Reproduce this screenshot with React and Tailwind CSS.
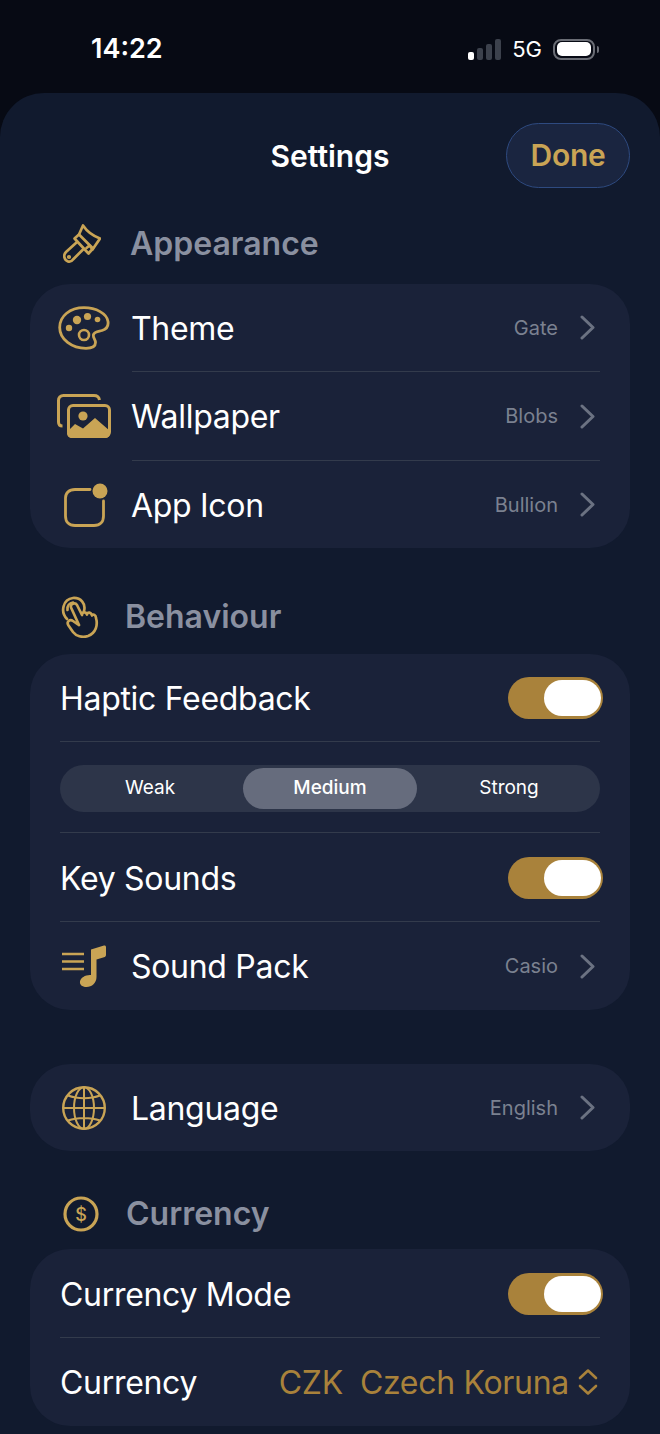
import React from 'react'

const GOLD = '#c9a455'

function BrushIcon() {
  return (
    <svg width="38" height="41" viewBox="8 8 38 41" fill="none" stroke={GOLD} strokeWidth="2.7" strokeLinejoin="round" strokeLinecap="round">
      <path d="M24 18.5 L28 9.5 C31 14 37 19.5 45 22.5 L37.5 33.5 L34.5 29.5 L31.5 32" />
      <path d="M19.5 22.5 L24 18.5 L38 32.5 L33.5 37.5 Z" />
      <path d="M21.5 26.5 L11 36 C8 39 9 44 13 45.5 C15 46 17 45 18 43.5 L28 33.5" />
      <circle cx="14" cy="41" r="1.2" strokeWidth="1.8" />
    </svg>
  )
}

function PaletteIcon() {
  return (
    <svg width="52" height="44" viewBox="0 0 52 44" fill="none">
      <path d="M26 1.7 C12 1.7 1.7 10 1.7 21.5 C1.7 33.5 14 42.3 28 42.3 C34 42.3 37.5 40.5 37.5 36.5 C37.5 33.5 34.5 31.5 35.5 28.5 C36.5 25.5 40.5 25.5 44 24.5 C48 23.3 50.6 20 50 15.5 C49 7.5 38 1.7 26 1.7Z" stroke={GOLD} strokeWidth="2.8" />
      <circle cx="19" cy="14" r="4.2" fill={GOLD} />
      <circle cx="29.5" cy="10.5" r="3.6" fill={GOLD} />
      <circle cx="39.5" cy="13.5" r="2.8" fill={GOLD} />
      <circle cx="11" cy="22" r="3.2" fill={GOLD} />
      <circle cx="26" cy="29" r="5" stroke={GOLD} strokeWidth="2.6" />
    </svg>
  )
}

function WallpaperIcon() {
  return (
    <svg width="54" height="44" viewBox="0 0 54 44" fill="none">
      <path d="M5.5 32 C3 32 1.5 30.5 1.5 28 V6.5 C1.5 3.5 3.5 1.5 6.5 1.5 H37 C40 1.5 42 3.2 42.5 6" stroke={GOLD} strokeWidth="3" />
      <rect x="11.5" y="11.5" width="41" height="31" rx="4.5" stroke={GOLD} strokeWidth="3" />
      <circle cx="26" cy="22" r="4.6" fill={GOLD} />
      <path d="M11 37 L18 30 L26 34.5 L38 24 L53 37 V39 C53 42 51 44 48 44 H15 C12 44 10 42 10 39Z" fill={GOLD} />
    </svg>
  )
}

function AppIconIcon() {
  return (
    <svg width="44" height="44" viewBox="0 0 44 44" fill="none">
      <path d="M26 6.5 H11 C5 6.5 1.5 10 1.5 15 V33 C1.5 39 5 42.5 11 42.5 H30 C36 42.5 39.5 39 39.5 33 V18" stroke={GOLD} strokeWidth="2.8" strokeLinecap="round" />
      <circle cx="36" cy="8" r="7.5" fill={GOLD} />
    </svg>
  )
}

function HandIcon() {
  return (
    <svg width="38" height="42" viewBox="6 4 38 42" fill="none" stroke={GOLD} strokeWidth="2.7" strokeLinecap="round" strokeLinejoin="round">
      <path d="M12 27 C5 20 8 7 18 6 C26 5.5 31 12 29 19" />
      <path d="M12.5 18 C12 14 14.5 11 18 10.5" />
      <path d="M24 33 L16 15.5 C15 12 20 10 22 13 L27 23 C27 19.5 31 19.5 32 22.5 C32.5 19.5 36 20 37 23.5 C38 21.5 41 23 41 26 C43 33 41 41 33 44 C27 46 21 44 18 40 L13.5 33.5 C11 29.5 15 27 18 29 L23 32.5" />
    </svg>
  )
}

function MusicIcon() {
  return (
    <svg width="46" height="44" viewBox="0 0 46 44" fill="none">
      <path d="M1 10 H23 M1 17.5 H23 M1 25 H23" stroke={GOLD} strokeWidth="2.4" />
      <path d="M30 5.5 L43 1.5 C44 1.2 45 1.8 45 3 V11 C45 12.3 44 13 43 13.3 L35.5 15.5 V33 C35.5 39 31 43 25.5 43 C21 43 18.5 40.5 19 37.5 C19.5 33.5 25 30.5 30 31 Z" fill={GOLD} />
    </svg>
  )
}

function GlobeIcon() {
  return (
    <svg width="44" height="44" viewBox="0 0 44 44" fill="none" stroke={GOLD} strokeWidth="2">
      <circle cx="22" cy="22" r="20.8" strokeWidth="2.4" />
      <ellipse cx="22" cy="22" rx="10" ry="20.8" />
      <path d="M22 1 V43 M1.5 22 H42.5 M6 9.5 C15 13 29 13 38 9.5 M6 34.5 C15 31 29 31 38 34.5" />
    </svg>
  )
}

function CoinIcon() {
  return (
    <svg width="36" height="36" viewBox="0 0 36 36" fill="none">
      <circle cx="18" cy="18" r="16" stroke={GOLD} strokeWidth="3.2" />
      <text x="18" y="24.5" textAnchor="middle" fontSize="18" fontWeight="500" fontFamily="Inter, sans-serif" fill={GOLD}>$</text>
    </svg>
  )
}

function Chevron() {
  return (
    <svg width="15" height="25" viewBox="0 0 15 25" fill="none" className="shrink-0">
      <path d="M2 2 L13 12.5 L2 23" stroke="#6b7282" strokeWidth="3" strokeLinecap="round" strokeLinejoin="round" />
    </svg>
  )
}

function SectionHead({ icon, iconClass, className, children }) {
  return (
    <div className={`flex h-[40px] items-center ${className}`}>
      <div className={`shrink-0 ${iconClass}`}>{icon}</div>
      <span className="text-[32px] font-semibold text-[#8a90a0]">{children}</span>
    </div>
  )
}

function Card({ className = '', children }) {
  return (
    <div className={`mx-[30px] rounded-[40px] bg-[#1a2239] ${className}`}>{children}</div>
  )
}

function Divider({ inset }) {
  return <div className={`h-px shrink-0 bg-[#333b4c] ${inset ? 'ml-[102px] mr-[30px]' : 'mx-[30px]'}`} />
}

function NavRow({ icon, iconClass, label, value, height = 'h-[88px]' }) {
  return (
    <div className={`flex items-center pr-[35px] ${height}`}>
      <div className="flex w-[102px] shrink-0 items-center">
        <div className={iconClass}>{icon}</div>
      </div>
      <span className="-ml-px flex-1 pt-[2px] text-[32px] tracking-[-0.3px] text-white">{label}</span>
      <span className="mr-[22px] text-[20px] text-[#7b8190]">{value}</span>
      <Chevron />
    </div>
  )
}

function Toggle() {
  return (
    <div className="flex h-[42px] w-[95px] items-center justify-end rounded-full bg-[#a9823b] pr-[2px]">
      <div className="h-[36px] w-[57px] rounded-full bg-white" />
    </div>
  )
}

function ToggleRow({ label, height = 'h-[88px]' }) {
  return (
    <div className={`flex items-center justify-between pl-[30px] pr-[27px] pt-[1px] ${height}`}>
      <span className="pt-[2px] text-[32px] tracking-[-0.3px] text-white">{label}</span>
      <Toggle />
    </div>
  )
}

function Segments() {
  return (
    <div className="flex h-[90px] items-start px-[30px] pt-[23px]">
      <div className="flex h-[47px] w-full items-center rounded-full bg-[#2d3549] px-[3px] text-[19px] text-white">
        <span className="w-[174px] text-center">Weak</span>
        <span className="ml-[6px] flex h-[41px] w-[174px] items-center justify-center rounded-full bg-[#666c7d] font-medium">Medium</span>
        <span className="flex-1 pl-[4px] text-center">Strong</span>
      </div>
    </div>
  )
}

function StatusBar() {
  return (
    <div className="flex h-[93px] items-start justify-between pl-[91px] pr-[61px] pt-[32px]">
      <span className="text-[27px] font-semibold leading-[34px] text-white">14:22</span>
      <div className="flex h-[34px] items-center">
        <div className="flex h-[22px] items-end gap-[3px]">
          <div className="h-[8px] w-[6px] rounded-[2px] bg-white" />
          <div className="h-[12px] w-[6px] rounded-[2px] bg-[#3c414c]" />
          <div className="h-[16px] w-[6px] rounded-[2px] bg-[#3c414c]" />
          <div className="h-[21px] w-[6px] rounded-[2px] bg-[#3c414c]" />
        </div>
        <span className="ml-[11px] text-[22px] text-white">5G</span>
        <div className="ml-[11px] flex h-[21px] w-[42px] items-center justify-center rounded-[8px] border-2 border-[#6a6d75]">
          <div className="h-[14px] w-[34px] rounded-[5px] bg-white" />
        </div>
        <div className="ml-[2px] h-[7px] w-[2px] rounded-r-full bg-[#6a6d75]" />
      </div>
    </div>
  )
}

export default function App() {
  return (
    <div className="h-[1434px] w-[660px] overflow-hidden bg-[#070a14] font-['Inter',sans-serif]">
      <StatusBar />
      <div className="h-[1341px] rounded-t-[44px] bg-[#111a2e]">

        {/* Header */}
        <div className="relative flex h-[95px] items-end justify-end pr-[30px]">
          <span className="absolute left-0 right-0 top-[44px] text-center text-[30px] font-semibold leading-[38px] text-white">Settings</span>
          <button className="flex h-[65px] w-[124px] items-center justify-center rounded-full border border-[#2e4a80] bg-[#1a2540] text-[30px] font-semibold tracking-[-0.3px] text-[#c9a455]">
            Done
          </button>
        </div>

        {/* Appearance */}
        <SectionHead className="mt-[36px] mb-[20px] pl-[63px]" iconClass="w-[67px]" icon={<BrushIcon />}>Appearance</SectionHead>
        <Card className="h-[264px]">
          <NavRow height="h-[87px]" icon={<PaletteIcon />} iconClass="ml-[28px]" label="Theme" value="Gate" />
          <Divider inset />
          <NavRow icon={<WallpaperIcon />} iconClass="ml-[27px]" label="Wallpaper" value="Blobs" />
          <Divider inset />
          <NavRow height="h-[87px]" icon={<AppIconIcon />} iconClass="ml-[34px]" label="App Icon" value="Bullion" />
        </Card>

        {/* Behaviour */}
        <SectionHead className="mt-[49px] mb-[17px] pl-[61px]" iconClass="w-[64px]" icon={<HandIcon />}>Behaviour</SectionHead>
        <Card className="h-[356px]">
          <ToggleRow height="h-[87px]" label="Haptic Feedback" />
          <Divider />
          <Segments />
          <Divider />
          <ToggleRow label="Key Sounds" />
          <Divider />
          <NavRow icon={<MusicIcon />} iconClass="ml-[31px]" label="Sound Pack" value="Casio" />
        </Card>

        {/* Language */}
        <Card className="mt-[54px] h-[87px]">
          <NavRow height="h-[87px]" icon={<GlobeIcon />} iconClass="ml-[32px]" label="Language" value="English" />
        </Card>

        {/* Currency */}
        <SectionHead className="mt-[43px] mb-[15px] pl-[63px]" iconClass="w-[63px]" icon={<CoinIcon />}>Currency</SectionHead>
        <Card className="h-[177px]">
          <ToggleRow label="Currency Mode" />
          <Divider />
          <div className="flex h-[88px] items-center pl-[30px] pr-[32px]">
            <span className="flex-1 pt-[2px] text-[32px] tracking-[-0.3px] text-white">Currency</span>
            <span className="pt-[2px] text-[32px] tracking-[-0.3px] text-[#a9823b]">CZK</span>
            <span className="ml-[17px] pt-[2px] text-[32px] tracking-[-0.3px] text-[#a9823b]">Czech Koruna</span>
            <svg width="20" height="28" viewBox="0 0 20 28" fill="none" className="ml-[9px]">
              <path d="M2 10 L10 2.5 L18 10 M2 18 L10 25.5 L18 18" stroke="#a9823b" strokeWidth="2.6" strokeLinecap="round" strokeLinejoin="round" />
            </svg>
          </div>
        </Card>
      </div>
    </div>
  )
}
